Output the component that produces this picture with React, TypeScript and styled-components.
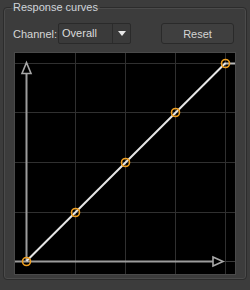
import React from "react";
import styled, { createGlobalStyle } from "styled-components";

const GlobalStyle = createGlobalStyle`
	html, body {
		margin: 0;
		padding: 0;
		background: #3c3c3c;
	}
	body {
		font-family: "Liberation Sans", Arial, sans-serif;
		font-size: 11px;
		color: #d2d2d2;
	}
`;

const Panel = styled.div`
	width: 250px;
	height: 290px;
	box-sizing: border-box;
	padding: 1px 4px 0 3px;
	background: #3c3c3c;
`;

const GroupBox = styled.fieldset`
	margin: 0;
	box-sizing: border-box;
	height: 279px;
	padding: 9px 10px 0 10px;
	border: 1px solid #2c2c2c;
	border-radius: 4px;
	box-shadow: inset 0 0 0 1px #4b4b4b;
	display: flex;
	flex-direction: column;
	gap: 8px;
`;

const Title = styled.legend`
	padding: 0 2px;
	margin-left: -3px;
	color: #cfd4da;
	font-size: 11px;
	line-height: 13px;
`;

const ControlRow = styled.div`
	display: flex;
	align-items: center;
	height: 21px;
`;

const Label = styled.span`
	flex: none;
	margin: 0 1px 0 -1px;
	color: #d6d6d6;
	font-size: 11px;
	white-space: nowrap;
`;

const Combo = styled.div`
	flex: none;
	width: 73px;
	height: 21px;
	box-sizing: border-box;
	display: flex;
	border: 1px solid #2a2a2a;
	border-radius: 2px;
	background: #3a3a3a;
`;

const ComboText = styled.span`
	flex: 1;
	padding-left: 3px;
	line-height: 19px;
	font-size: 11px;
	color: #dcdcdc;
`;

const ComboArrow = styled.span`
	width: 17px;
	display: flex;
	align-items: center;
	justify-content: center;
	border-left: 1px solid #2c2c2c;
	&::after {
		content: "";
		border-left: 4px solid transparent;
		border-right: 4px solid transparent;
		border-top: 5px solid #e6e6e6;
	}
`;

const ResetButton = styled.button`
	flex: none;
	margin-left: 30px;
	width: 73px;
	height: 21px;
	box-sizing: border-box;
	border: 1px solid #2a2a2a;
	border-radius: 3px;
	background: #3f3f3f;
	color: #d4d4d4;
	font-family: "Liberation Sans", Arial, sans-serif;
	font-size: 11px;
	padding: 0;
`;

const Graph = styled.div`
	width: 222px;
	height: 223px;
	box-sizing: border-box;
	border: 1px solid #4a4a4a;
	background: #000;
`;

const points: [number, number][] = [
	[11, 208],
	[60, 159],
	[110, 109],
	[160, 59],
	[210, 10],
];

const ticks = [60, 110, 160, 210];
const hticks = [10, 59, 109, 159];

const Curve = () => (
	<svg width={220} height={221} viewBox="0 0 220 221">
		{ticks.map(x => (
			<line key={"v" + x} x1={x + 0.5} y1={0} x2={x + 0.5} y2={221} stroke="#303030" strokeWidth={1} />
		))}
		{hticks.map(y => (
			<line key={"h" + y} x1={0} y1={y + 0.5} x2={220} y2={y + 0.5} stroke="#303030" strokeWidth={1} />
		))}
		{/* axes */}
		<line x1={11.5} y1={20} x2={11.5} y2={208} stroke="#9c9c9c" strokeWidth={2} />
		<line x1={0} y1={208.5} x2={198} y2={208.5} stroke="#9c9c9c" strokeWidth={2} />
		<line x1={208} y1={208.5} x2={220} y2={208.5} stroke="#3a3a3a" strokeWidth={1} />
		<polygon points="11.5,9.5 7,20.5 16,20.5" fill="none" stroke="#a8a8a8" strokeWidth={1.6} />
		<polygon points="208,208.5 198,204 198,213" fill="none" stroke="#a8a8a8" strokeWidth={1.6} />
		{/* curve */}
		<line x1={210} y1={10.5} x2={220} y2={10.5} stroke="#b8b8b8" strokeWidth={2} />
		<line x1={11.5} y1={208} x2={210.5} y2={10} stroke="#e6e6e6" strokeWidth={2} />
		{points.map(([x, y]) => (
			<circle key={x} cx={x + 0.5} cy={y + 0.5} r={4} fill="none" stroke="#f0a020" strokeWidth={1.6} />
		))}
	</svg>
);

export default function App() {
	return (
		<>
			<GlobalStyle />
			<Panel>
				<GroupBox>
					<Title>Response curves</Title>
					<ControlRow>
						<Label>Channel:</Label>
						<Combo>
							<ComboText>Overall</ComboText>
							<ComboArrow />
						</Combo>
						<ResetButton>Reset</ResetButton>
					</ControlRow>
					<Graph>
						<Curve />
					</Graph>
				</GroupBox>
			</Panel>
		</>
	);
}
